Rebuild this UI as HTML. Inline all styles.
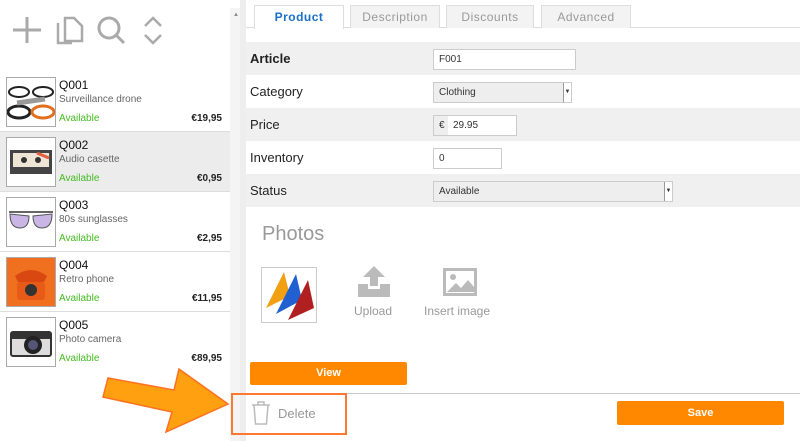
<!DOCTYPE html><html><head><style>
*{margin:0;padding:0;box-sizing:border-box}
body{width:800px;height:441px;overflow:hidden;background:#fff;font-family:"Liberation Sans","DejaVu Sans",sans-serif;position:relative}
.a{position:absolute}
.item{position:absolute;left:0;width:230px;height:60px;border-bottom:1px solid #ddd}
.th{position:absolute;left:6px;top:5px;width:50px;height:50px;border:1px solid #aaa;background:#fff}
.code{position:absolute;left:59px;top:6px;font-size:12px;color:#111}
.nm{position:absolute;left:59px;top:22px;font-size:10px;color:#666}
.av{position:absolute;left:59px;top:41px;font-size:10px;color:#44bb22}
.pr{position:absolute;right:8px;top:41px;font-size:10px;color:#222;font-weight:bold}
.tab{position:absolute;top:5px;height:23px;border:1px solid #ddd;border-bottom:none;background:#f3f3f3;font-size:12px;color:#999;text-align:center;line-height:23px;letter-spacing:.5px}
.row{position:absolute;left:246px;width:554px;height:33px;font-size:13px;color:#222;padding:0 0 0 4px;line-height:33px}
.g{background:#f0f0f0}
.inp{position:absolute;left:433px;height:21px;border:1px solid #ccc;background:#fff;font-size:10px;line-height:19px;padding-left:5px;color:#333}
.sel{background:#eee}
.sel b{position:absolute;right:0;top:0;width:8px;height:19px;border-left:1px solid #999;background:#fff;font-size:6px;line-height:19px;text-align:center}
.btn{position:absolute;background:#ff8800;color:#fff;font-size:11px;font-weight:bold;text-align:center;border-radius:2px}
</style></head><body>
<div class="a" style="left:230px;top:8px;width:10px;height:433px;background:#f4f4f4"></div>
<div class="a" style="left:240px;top:0;width:6px;height:441px;background:#eee"></div>
<div class="a" style="left:233px;top:12px;font-size:6px;color:#888">▲</div>
<svg class="a" style="left:10px;top:14px" width="160" height="34" viewBox="0 0 160 34" fill="none" stroke="#aaa" stroke-width="3">
<path d="M17 3v26M3 16h28"/>
<path d="M55 4h9l8 8v15h-17z M48 9v20h14" stroke-width="2.5"/>
<circle cx="99" cy="14" r="10"/><path d="M106 21l8 8"/>
<path d="M135 12l8-8 8 8M135 21l8 8 8-8" stroke-width="2.5"/>
</svg>
<div class="item" style="top:72px">
<div class="th"><svg width="48" height="48"><ellipse cx="12" cy="14" rx="10" ry="5" fill="none" stroke="#222" stroke-width="2"/><ellipse cx="36" cy="14" rx="10" ry="5" fill="none" stroke="#222" stroke-width="2"/><ellipse cx="12" cy="34" rx="11" ry="6" fill="none" stroke="#222" stroke-width="3"/><ellipse cx="36" cy="34" rx="11" ry="6" fill="none" stroke="#e07020" stroke-width="3"/><path d="M10 25l28-4" stroke="#999" stroke-width="5"/></svg></div>
<div class="code">Q001</div><div class="nm">Surveillance drone</div><div class="av">Available</div><div class="pr">€19,95</div></div>
<div class="item" style="top:132px;background:#ececec">
<div class="th"><svg width="48" height="48"><rect x="3" y="12" width="42" height="24" fill="#444"/><rect x="6" y="15" width="36" height="14" fill="#eee5d5"/><circle cx="17" cy="22" r="3" fill="#333"/><circle cx="31" cy="22" r="3" fill="#333"/><path d="M30 15l12 5" stroke="#e06040" stroke-width="3"/></svg></div>
<div class="code">Q002</div><div class="nm">Audio casette</div><div class="av">Available</div><div class="pr">€0,95</div></div>
<div class="item" style="top:192px">
<div class="th"><svg width="48" height="48"><path d="M2 14h44" stroke="#666" stroke-width="2"/><path d="M3 16q0 14 10 14q9 0 9-12zM26 18q0 12 9 12q10 0 10-14z" fill="#c9b6e6" stroke="#555"/></svg></div>
<div class="code">Q003</div><div class="nm">80s sunglasses</div><div class="av">Available</div><div class="pr">€2,95</div></div>
<div class="item" style="top:252px">
<div class="th" style="background:#f07020"><svg width="48" height="48"><path d="M8 18q16-12 32 0l-3 6h-26z" fill="#d84810"/><rect x="10" y="24" width="28" height="18" rx="3" fill="#e85a18"/><circle cx="24" cy="32" r="6" fill="#333"/></svg></div>
<div class="code">Q004</div><div class="nm">Retro phone</div><div class="av">Available</div><div class="pr">€11,95</div></div>
<div class="item" style="top:312px;border-bottom:none">
<div class="th"><svg width="48" height="48"><rect x="4" y="14" width="40" height="24" rx="2" fill="#ddd" stroke="#333" stroke-width="2"/><rect x="4" y="14" width="40" height="7" fill="#333"/><circle cx="26" cy="27" r="9" fill="#222"/><circle cx="26" cy="27" r="5" fill="#557"/></svg></div>
<div class="code">Q005</div><div class="nm">Photo camera</div><div class="av">Available</div><div class="pr">€89,95</div></div>

<div class="a" style="left:246px;top:27px;width:554px;height:1px;background:#ddd"></div>
<div class="tab" style="left:254px;width:90px;background:#fff;color:#1a6fc8;font-weight:bold;height:24px">Product</div>
<div class="tab" style="left:350px;width:90px">Description</div>
<div class="tab" style="left:446px;width:88px">Discounts</div>
<div class="tab" style="left:541px;width:90px">Advanced</div>

<div class="row g" style="top:42px;font-weight:bold">Article</div>
<div class="row" style="top:75px">Category</div>
<div class="row g" style="top:108px">Price</div>
<div class="row" style="top:141px">Inventory</div>
<div class="row g" style="top:174px">Status</div>
<div class="inp" style="top:49px;width:143px">F001</div>
<div class="inp sel" style="top:82px;width:139px">Clothing<b>▼</b></div>
<div class="inp" style="top:115px;width:84px;background:#eee;padding:0"><span style="padding-left:5px">€</span><span style="position:absolute;left:14px;top:0;bottom:0;right:0;background:#fff;padding-left:5px">29.95</span></div>
<div class="inp" style="top:148px;width:69px">0</div>
<div class="inp sel" style="top:181px;width:240px">Available<b>▼</b></div>

<div class="a" style="left:262px;top:223px;font-size:20px;color:#999">Photos</div>
<div class="a" style="left:261px;top:267px;width:56px;height:56px;border:1px solid #ccc;background:#fff"><svg width="54" height="54"><path d="M4 40l18-36 6 24z" fill="#f0a010"/><path d="M14 46l20-40 6 26z" fill="#2060d0"/><path d="M26 52l20-40 6 28z" fill="#b02020"/></svg></div>
<svg class="a" style="left:357px;top:264px" width="34" height="34"><path d="M17 2l-11 11h7v9h8v-9h7z" fill="#bbb"/><path d="M1 20h10v5h12v-5h10v13h-32z" fill="#bbb"/></svg>
<div class="a" style="left:354px;top:304px;font-size:12px;color:#999">Upload</div>
<svg class="a" style="left:443px;top:268px" width="34" height="28"><rect x="1.5" y="1.5" width="31" height="25" fill="none" stroke="#bbb" stroke-width="3"/><circle cx="10" cy="9" r="3" fill="#bbb"/><path d="M4 24l9-9 5 5 7-8 6 7v5z" fill="#bbb"/></svg>
<div class="a" style="left:424px;top:304px;font-size:12px;color:#999">Insert image</div>

<div class="btn" style="left:250px;top:362px;width:157px;height:23px;line-height:23px">View</div>
<div class="a" style="left:246px;top:393px;width:554px;height:1px;background:#ccc"></div>
<div class="btn" style="left:617px;top:401px;width:167px;height:24px;line-height:24px">Save</div>
<svg class="a" style="left:250px;top:400px" width="22" height="26" fill="none" stroke="#bbb" stroke-width="1.5"><path d="M2 5h18M8 5V2h6v3M4 5l1.5 19h11L18 5"/></svg>
<div class="a" style="left:278px;top:406px;font-size:13px;color:#999">Delete</div>
<div class="a" style="left:231px;top:393px;width:116px;height:42px;border:2px solid #ff7a30"></div>
<svg class="a" style="left:0;top:0" width="800" height="441"><path d="M108 378L174 390 179 369 228 404 166 432 172 412 103 397z" fill="#ffa010" stroke="#ff7020" stroke-width="1.5"/></svg>
</body></html>
